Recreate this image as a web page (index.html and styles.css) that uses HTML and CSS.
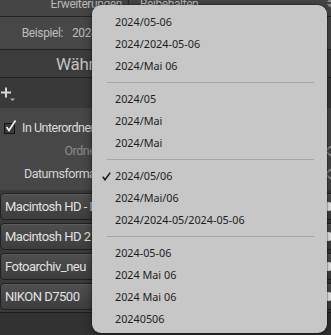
FILE: index.html
```html
<!DOCTYPE html>
<html lang="de">
<head>
<meta charset="utf-8">
<title>Import – Dateiumbenennung</title>
<link rel="stylesheet" href="styles.css">
</head>
<body>
<div class="panel">
  <div class="row-top">
    <span class="top-label">Erweiterungen</span>
    <span class="top-popup">Reibehalten</span>
    <svg class="stepper stepper-top" width="8" height="12" viewBox="0 0 8 12"><path d="M1 5 L4 1.5 L7 5 Z M1 7 L4 10.5 L7 7 Z" fill="#8c8c8c"/></svg>
  </div>
  <div class="row-example">
    <span class="ex-label">Beispiel:</span>
    <span class="ex-value">2024/05/06/DSC_0001.NEF</span>
  </div>
  <div class="row-action">
    <span class="action-text">Während des Imports anwenden</span>
  </div>
  <div class="row-add">
    <svg class="add-icon" width="16" height="16" viewBox="0 0 16 16">
      <path d="M5 0.5 V10.5 M0 5.5 H10" stroke="#d8d8d8" stroke-width="2" fill="none"/>
      <path d="M9 11.5 H14 L11.5 14 Z" fill="#b0b0b0"/>
    </svg>
  </div>
  <div class="options">
    <div class="opt-row check-row">
      <span class="checkbox">
        <svg width="14" height="14" viewBox="0 0 14 14"><path d="M2.5 7 L5 10.5 L11.5 0.5" stroke="#f2f2f2" stroke-width="1.8" fill="none"/></svg>
      </span>
      <span class="check-label">In Unterordner</span>
    </div>
    <div class="opt-row field">
      <span class="field-label dim">Ordner</span>
      <span class="field-popup"></span>
      <svg class="stepper" width="8" height="12" viewBox="0 0 8 12"><path d="M1 5 L4 1.5 L7 5 M1 7 L4 10.5 L7 7" stroke="#9a9a9a" stroke-width="1.2" fill="none"/></svg>
    </div>
    <div class="opt-row field">
      <span class="field-label">Datumsformat</span>
      <span class="field-popup"></span>
      <svg class="stepper" width="8" height="12" viewBox="0 0 8 12"><path d="M1 5 L4 1.5 L7 5 M1 7 L4 10.5 L7 7" stroke="#9a9a9a" stroke-width="1.2" fill="none"/></svg>
    </div>
  </div>
  <ul class="volumes">
    <li class="volume"><span class="vol-name">Macintosh HD - Daten</span><span class="vol-dot"></span></li>
    <li class="volume"><span class="vol-name">Macintosh HD 2</span><span class="vol-dot"></span></li>
    <li class="volume"><span class="vol-name">Fotoarchiv_neu</span><span class="vol-dot"></span></li>
    <li class="volume"><span class="vol-name">NIKON D7500</span><span class="vol-dot"></span></li>
  </ul>
  <div class="footer"></div>
</div>

<div class="menu" role="menu">
  <div class="item">2024/05-06</div>
  <div class="item">2024/2024-05-06</div>
  <div class="item">2024/Mai 06</div>
  <div class="sep"></div>
  <div class="item">2024/05</div>
  <div class="item">2024/Mai</div>
  <div class="item">2024/Mai</div>
  <div class="sep"></div>
  <div class="item checked"><svg class="check" width="9" height="9" viewBox="0 0 9 9"><path d="M0.8 4.8 L3 7.8 L8.2 0.6" stroke="#1e1e1e" stroke-width="1.6" fill="none"/></svg>2024/05/06</div>
  <div class="item">2024/Mai/06</div>
  <div class="item">2024/2024-05/2024-05-06</div>
  <div class="sep"></div>
  <div class="item">2024-05-06</div>
  <div class="item">2024 Mai 06</div>
  <div class="item">2024 Mai 06</div>
  <div class="item">20240506</div>
</div>
</body>
</html>
```

FILE: styles.css
```css
html, body {
  margin: 0;
  padding: 0;
}

body {
  width: 331px;
  height: 335px;
  overflow: hidden;
  position: relative;
  background: #3a3a3a;
  font-family: Roboto, "Liberation Sans", sans-serif;
}

.panel {
  width: 331px;
  display: flex;
  flex-direction: column;
}

/* top row */
.row-top {
  height: 16px;
  background: #454545;
  border-bottom: 1px solid #242424;
  display: flex;
  align-items: flex-end;
  overflow: hidden;
}

.top-label {
  width: 122px;
  text-align: right;
  color: #b8b8b8;
  font-size: 12px;
  letter-spacing: -0.4px;
  line-height: 14px;
  margin-bottom: 5px;
  flex: none;
}

.top-popup {
  flex: 1;
  align-self: stretch;
  margin-left: 6px;
  border-left: 1px solid #2a2a2a;
  padding-left: 11px;
  color: #b8b8b8;
  font-size: 12px;
  letter-spacing: -0.4px;
  line-height: 14px;
  display: flex;
  align-items: flex-end;
  padding-bottom: 5px;
}

.stepper-top {
  align-self: flex-start;
  margin: -3px 1px 0 0;
  flex: none;
}

/* example row */
.row-example {
  height: 32px;
  background: #474747;
  border-bottom: 1px solid #242424;
  display: flex;
  align-items: center;
  font-size: 12px;
  letter-spacing: -0.4px;
  color: #bdbdbd;
  white-space: nowrap;
  overflow: hidden;
}

.ex-label {
  width: 63px;
  text-align: right;
  flex: none;
}

.ex-value {
  margin-left: 9px;
}

/* action button row */
.row-action {
  height: 27px;
  background: #3c3c3c;
  border-bottom: 1px solid #222;
  display: flex;
  align-items: center;
  white-space: nowrap;
  overflow: hidden;
}

.action-text {
  padding-left: 56px;
  font-size: 17px;
  letter-spacing: -0.3px;
  color: #c4c4c4;
}

/* add row */
.row-add {
  height: 30px;
  background: #393939;
  display: flex;
  align-items: center;
  padding-left: 1px;
}

.add-icon {
  margin-top: 3px;
}

/* options */
.options {
  background: #474747;
  padding: 8px 0 5px;
  display: flex;
  flex-direction: column;
}

.opt-row {
  height: 23px;
  display: flex;
  align-items: center;
  white-space: nowrap;
}

.checkbox {
  width: 9px;
  height: 9px;
  border: 1px solid #141414;
  background: #3a3a3a;
  margin-left: 4px;
  margin-top: 1px;
  position: relative;
  flex: none;
}

.checkbox svg {
  position: absolute;
  left: -1px;
  top: -4px;
}

.check-label {
  margin-left: 7px;
  font-size: 12.5px;
  letter-spacing: -0.5px;
  color: #dedede;
}

.field-label {
  width: 99px;
  text-align: right;
  font-size: 12.5px;
  letter-spacing: -0.5px;
  color: #d6d6d6;
  flex: none;
}

.field-label.dim {
  color: #8a8a8a;
}

.field-popup {
  flex: 1;
}

.stepper {
  flex: none;
  margin-right: -3px;
}

/* volumes */
.volumes {
  list-style: none;
  margin: 0;
  padding: 3px 0 0;
  display: flex;
  flex-direction: column;
  gap: 3px;
  background: #3a3a3a;
}

.volume {
  height: 25px;
  border: 1px solid #202020;
  border-radius: 4px;
  background: linear-gradient(#4f4f4f, #3d3d3d);
  box-shadow: inset 0 1px 0 rgba(255, 255, 255, 0.07);
  display: flex;
  align-items: center;
  justify-content: space-between;
  overflow: hidden;
  margin-right: -6px;
}

.vol-name {
  padding-left: 4px;
  font-size: 13px;
  letter-spacing: -0.5px;
  color: #e2e2e2;
  white-space: nowrap;
}

.vol-dot {
  width: 9px;
  height: 9px;
  border-radius: 50%;
  background: #f2f2f2;
  margin-right: 3px;
  flex: none;
}

.footer {
  margin-top: 2px;
  height: 30px;
  background: #323232;
  border-top: 1px solid #1c1c1c;
}

/* popup menu overlay */
.menu {
  position: absolute;
  left: 92px;
  top: 5px;
  width: 235px;
  height: 328px;
  box-sizing: border-box;
  padding-top: 6px;
  background: #c7c7c7;
  border-radius: 9px;
  box-shadow: 0 2px 8px rgba(0, 0, 0, 0.45), 0 0 0 0.5px rgba(0, 0, 0, 0.35);
  font-family: "Noto Sans", "Open Sans", sans-serif;
  font-size: 10.8px;
  color: #1e1e1e;
}

.item {
  height: 22px;
  line-height: 22px;
  padding-left: 23px;
  position: relative;
  white-space: nowrap;
}

.check {
  position: absolute;
  left: 10px;
  top: 7px;
}

.sep {
  height: 1px;
  margin: 5px 13px 5px 15px;
  background: #a6a6a6;
}
```
